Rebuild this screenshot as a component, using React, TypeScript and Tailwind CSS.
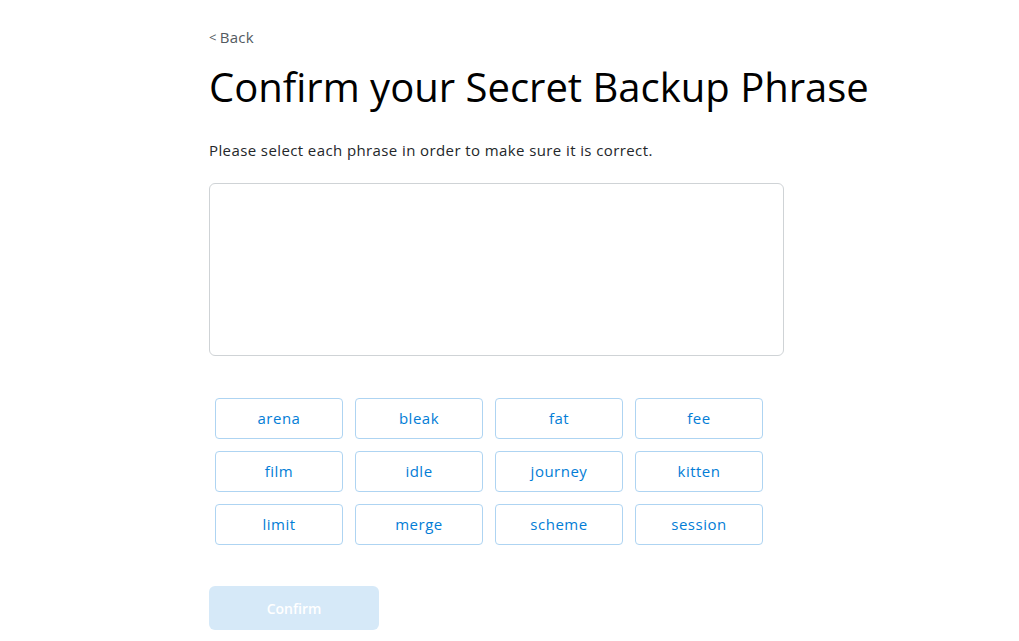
const words = [
  "arena", "bleak", "fat", "fee",
  "film", "idle", "journey", "kitten",
  "limit", "merge", "scheme", "session",
];

export default function App() {
  return (
    <div className="min-h-screen bg-white font-['Open_Sans',sans-serif] text-black">
      <div className="ml-[209px] pt-[27px] w-[580px]">
        <button className="flex items-center gap-[3px] text-[15px] tracking-[0.3px] text-[#535a61] leading-[20px]">
          <span className="text-[13px]">&lt;</span>
          <span>Back</span>
        </button>

        <h1 className="mt-[15px] text-[40px] leading-[50px] whitespace-nowrap">
          Confirm your Secret Backup Phrase
        </h1>

        <p className="mt-[28px] text-[15px] tracking-[0.4px] leading-[20px] text-[#24272a]">
          Please select each phrase in order to make sure it is correct.
        </p>

        <div className="mt-[23px] h-[173px] w-[575px] rounded-[6px] border border-[#cfd3d6]"></div>

        <div className="mt-[42px] ml-[6px] grid grid-cols-[repeat(4,128px)] gap-x-[12px] gap-y-[12px]">
          {words.map((w) => (
            <button
              key={w}
              className="h-[41px] rounded-[4px] border border-[#aed4f2] text-[15px] tracking-[0.5px] text-[#037dd6]"
            >
              {w}
            </button>
          ))}
        </div>

        <button className="mt-[41px] h-[44px] w-[170px] rounded-[6px] bg-[#d6e9f8] text-[14px] font-semibold text-white">
          Confirm
        </button>
      </div>
    </div>
  );
}
